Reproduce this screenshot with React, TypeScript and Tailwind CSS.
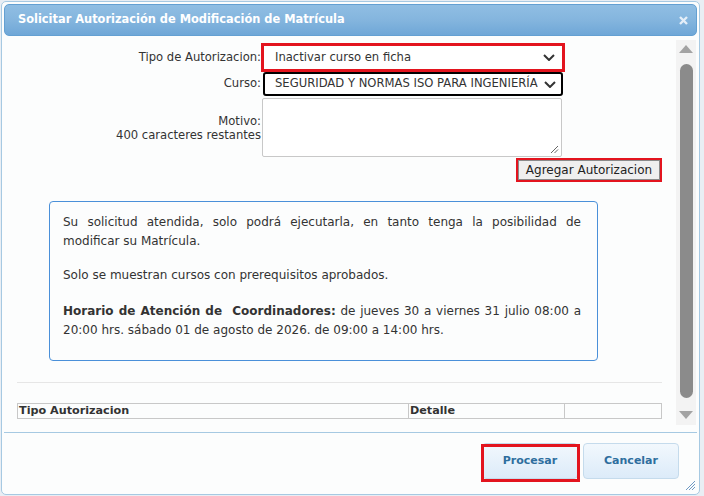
import React from "react";

function Chevron() {
  return (
    <svg width="12" height="7" viewBox="0 0 12 7" className="shrink-0">
      <path d="M1 1 L6 6 L11 1" fill="none" stroke="#333" strokeWidth="2" />
    </svg>
  );
}

function FakeScrollbar() {
  return (
    <div className="mt-[4px] mb-[7px] mr-[1px] w-[20px] bg-[#f3f3f3] flex flex-col items-center">
      <svg width="14" height="8" viewBox="0 0 14 8" className="mt-[5px]">
        <path d="M0 8 L7 0 L14 8 Z" fill="#a3a3a3" />
      </svg>
      <div className="mt-[11px] w-[13px] h-[334px] rounded-full bg-[#8b8b8b]" />
      <svg width="14" height="8" viewBox="0 0 14 8" className="mt-[13px]">
        <path d="M0 0 L14 0 L7 8 Z" fill="#a3a3a3" />
      </svg>
    </div>
  );
}

export default function App() {
  return (
    <div
      className="w-[704px] h-[496px] bg-[#e9eef4] overflow-hidden text-[#333]"
      style={{ fontFamily: "'DejaVu Sans', sans-serif" }}
    >
      <div className="ml-[1px] mt-[1px] w-[699px] h-[494px] border border-[#a6c9e2] rounded-[5px] bg-[#fcfdfd] p-[2px] flex flex-col">
        {/* title bar */}
        <div className="h-[32px] shrink-0 rounded-[5px] border border-[#64a0d2] bg-gradient-to-b from-[#90bee3] via-[#84b5de] to-[#6fa7d7] flex items-center justify-between pl-[13px] pr-[8px]">
          <span className="text-white font-bold text-[11.4px]">
            Solicitar Autorización de Modificación de Matrícula
          </span>
          <svg width="9" height="9" viewBox="0 0 9 9">
            <path d="M1 1 L8 8 M8 1 L1 8" stroke="#e4eef8" strokeWidth="2.4" />
          </svg>
        </div>

        {/* scrolling body */}
        <div className="h-[396px] shrink-0 flex justify-between">
          <div className="w-[645px] ml-[13px] pt-[7px] text-[11.6px]">
            <div className="flex items-center h-[29px]">
              <div className="w-[244px] text-right">Tipo de Autorizacion:</div>
              <div className="w-[304px] h-[29px] border-[3px] border-[#e3141e] bg-white flex items-center justify-between pl-[11px] pr-[7px]">
                <span>Inactivar curso en ficha</span>
                <Chevron />
              </div>
            </div>
            <div className="flex items-center h-[24px]">
              <div className="w-[244px] text-right">Curso:</div>
              <div className="ml-[2px] w-[300px] h-[24px] border-2 border-black rounded-[3px] bg-white flex items-center justify-between pl-[10px] pr-[5px]">
                <span className="whitespace-nowrap overflow-hidden">SEGURIDAD Y NORMAS ISO PARA INGENIERÍA</span>
                <Chevron />
              </div>
            </div>
            <div className="flex items-center h-[59px] mt-[2px]">
              <div className="w-[244px] text-right leading-[14px]">
                <div>Motivo:</div>
                <div>400 caracteres restantes</div>
              </div>
              <div className="ml-[1px] w-[300px] h-[59px] border border-[#c8c8c8] rounded-[2px] bg-white flex items-end justify-end p-[2px]">
                <svg width="9" height="9" viewBox="0 0 9 9">
                  <path d="M1 8 L8 1 M4.5 8 L8 4.5" stroke="#666" strokeWidth="1" />
                </svg>
              </div>
            </div>
            <div className="flex justify-end mt-[1px]">
              <div className="border-2 border-[#e3141e]">
                <div className="w-[142px] h-[20px] border border-[#8a8a8a] bg-[#efefef] flex items-center justify-center text-[12px] text-[#222]">
                  Agregar Autorizacion
                </div>
              </div>
            </div>

            {/* info box */}
            <div className="ml-[32px] mt-[19px] w-[549px] border border-[#4a90d9] rounded-[4px] pt-[11px] pb-[20px] pl-[13px] pr-[16px] text-[12px] leading-[19px] text-justify">
              <p className="mb-[15px]">
                Su solicitud atendida, solo podrá ejecutarla, en tanto tenga la posibilidad de modificar su Matrícula.
              </p>
              <p className="mb-[17px]">Solo se muestran cursos con prerequisitos aprobados.</p>
              <p>
                <b>Horario de Atención de&nbsp; Coordinadores:</b> de jueves 30 a viernes 31 julio 08:00 a 20:00 hrs.
                sábado 01 de agosto de 2026. de 09:00 a 14:00 hrs.
              </p>
            </div>

            <div className="mt-[21px] h-px bg-[#e6e6e6]" />

            {/* authorizations table */}
            <div className="mt-[20px] flex h-[16px] border border-[#c8c8c8] text-[11.2px] font-bold leading-[14px]">
              <div className="w-[391px] pl-[1px] border-r border-[#c8c8c8]">Tipo Autorizacion</div>
              <div className="w-[156px] pl-[1px] border-r border-[#c8c8c8]">Detalle</div>
              <div className="flex-1" />
            </div>
          </div>
          <FakeScrollbar />
        </div>

        {/* button pane */}
        <div className="flex-1 border-t border-[#a6c9e2] flex justify-end items-start gap-[5px] pt-[10px] pr-[18px] relative">
          <div className="relative">
            <button className="w-[96px] h-[36px] rounded-[4px] border border-[#c5dbec] bg-gradient-to-b from-[#f2f8fd] to-[#dcebf9] text-[#2e6e9e] font-bold text-[11px]">
              Procesar
            </button>
            <span className="absolute left-[-1px] top-[1px] w-[99px] h-[38px] border-[3px] border-[#e3141e]" />
          </div>
          <button className="w-[96px] h-[36px] rounded-[4px] border border-[#c5dbec] bg-gradient-to-b from-[#f2f8fd] to-[#dcebf9] text-[#2e6e9e] font-bold text-[11px]">
            Cancelar
          </button>
          <svg width="11" height="11" viewBox="0 0 11 11" className="absolute right-[1px] bottom-[1px]">
            <path d="M1 10 L10 1 M4 10 L10 4 M7 10 L10 7" stroke="#6f9ac4" strokeWidth="1" />
          </svg>
        </div>
      </div>
    </div>
  );
}
